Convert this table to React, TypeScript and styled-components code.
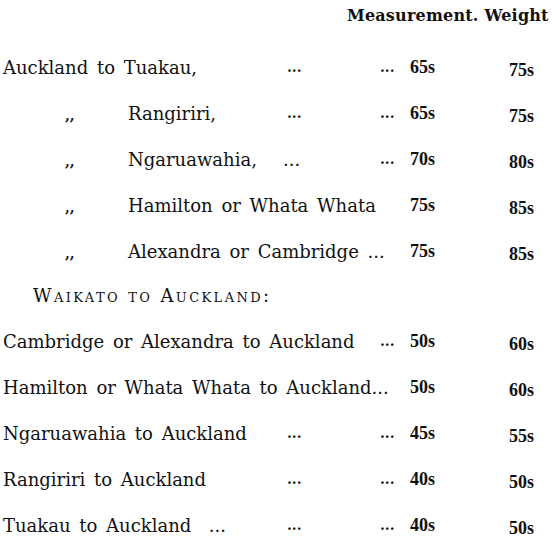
import styled, { createGlobalStyle } from 'styled-components'

const GlobalStyle = createGlobalStyle`
  body {
    margin: 0;
    background: #ffffff;
  }
`

type Fare = {
  ditto?: boolean
  label: string
  span?: number
  dots1?: boolean
  dots2?: boolean
  measure: string
  weight: string
}

const outward: Fare[] = [
  { label: 'Auckland to Tuakau,', dots1: true, dots2: true, measure: '65s', weight: '75s' },
  { ditto: true, label: 'Rangiriri,', dots1: true, dots2: true, measure: '65s', weight: '75s' },
  { ditto: true, label: 'Ngaruawahia,   ...', span: 2, dots2: true, measure: '70s', weight: '80s' },
  { ditto: true, label: 'Hamilton or Whata Whata', span: 3, measure: '75s', weight: '85s' },
  { ditto: true, label: 'Alexandra or Cambridge ...', span: 3, measure: '75s', weight: '85s' },
]

const inward: Fare[] = [
  { label: 'Cambridge or Alexandra to Auckland', span: 2, dots2: true, measure: '50s', weight: '60s' },
  { label: 'Hamilton or Whata Whata to Auckland...', span: 3, measure: '50s', weight: '60s' },
  { label: 'Ngaruawahia to Auckland', dots1: true, dots2: true, measure: '45s', weight: '55s' },
  { label: 'Rangiriri to Auckland', dots1: true, dots2: true, measure: '40s', weight: '50s' },
  { label: 'Tuakau to Auckland  ...', dots1: true, dots2: true, measure: '40s', weight: '50s' },
]

function FareRow({ fare }: { fare: Fare }): JSX.Element {
  const span = fare.span ?? 1
  return (
    <Row>
      <Label $span={span}>
        {fare.ditto && <Ditto>,,</Ditto>}
        {fare.label}
      </Label>
      {span < 2 && <Dots>{fare.dots1 ? '...' : ''}</Dots>}
      {span < 3 && <Dots>{fare.dots2 ? '...' : ''}</Dots>}
      <Price>{fare.measure}</Price>
      <Price $low>{fare.weight}</Price>
    </Row>
  )
}

export default function App(): JSX.Element {
  return (
    <>
      <GlobalStyle />
      <Page>
        <Header>Measurement. Weight</Header>
        {outward.map((f) => (
          <FareRow key={f.label} fare={f} />
        ))}
        <Section>Waikato to Auckland:</Section>
        {inward.map((f) => (
          <FareRow key={f.label} fare={f} />
        ))}
      </Page>
    </>
  )
}

const Page = styled.div`
  width: 554px;
  height: 543px;
  box-sizing: border-box;
  padding: 4px 0 0 3px;
  font-family: 'DejaVu Serif', 'Liberation Serif', serif;
  font-size: 18px;
  color: #111111;
  overflow: hidden;
`

const Header = styled.div`
  height: 40px;
  line-height: 24px;
  padding-left: 344px;
  font-weight: bold;
  font-size: 16px;
  letter-spacing: 0.2px;
  white-space: nowrap;
`

const Row = styled.div`
  display: grid;
  grid-template-columns: 284px 93px 30px 99px 1fr;
  align-items: center;
  height: 46px;
`

const Label = styled.div<{ $span: number }>`
  grid-column: span ${(p) => p.$span};
  white-space: pre;
  word-spacing: 3px;
`

const Ditto = styled.span`
  display: inline-block;
  width: 125px;
  padding-left: 62px;
  box-sizing: border-box;
  font-weight: bold;
  font-size: 14px;
`

const Dots = styled.div`
  font-weight: bold;
  font-size: 14px;
`

const Price = styled.div<{ $low?: boolean }>`
  font-family: 'Liberation Serif', serif;
  font-weight: bold;
  font-size: 18px;
  padding-top: ${(p) => (p.$low ? '6px' : '0')};
`

const Section = styled.div`
  height: 44px;
  line-height: 44px;
  padding-left: 30px;
  font-variant: small-caps;
  letter-spacing: 2.4px;
  font-size: 18px;
`
